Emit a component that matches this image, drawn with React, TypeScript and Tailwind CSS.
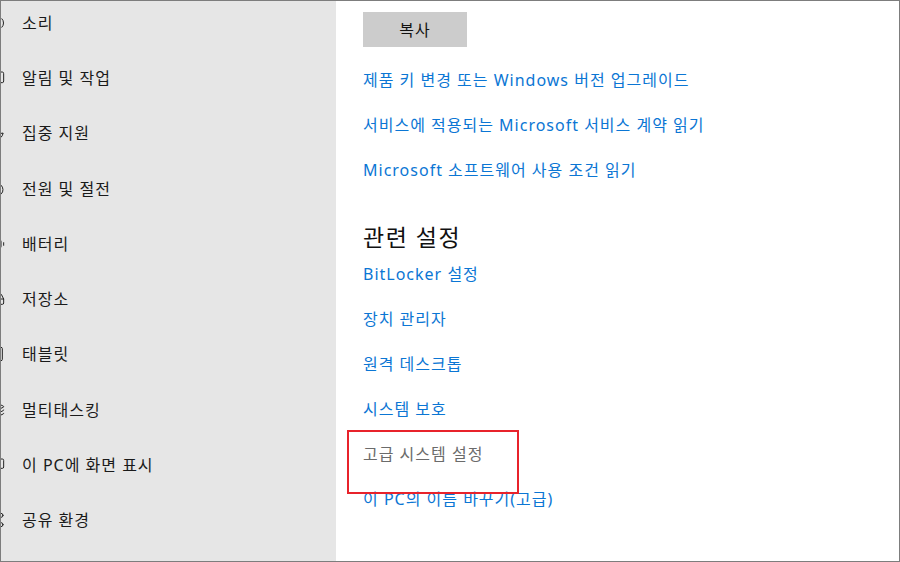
import React from "react";
import { Volume2, MessageSquare, Moon, Power, BatteryMedium, HardDrive, Tablet, Layers, Monitor, Share2 } from "lucide-react";

const side = [
  { t: "소리", I: Volume2 },
  { t: "알림 및 작업", I: MessageSquare },
  { t: "집중 지원", I: Moon },
  { t: "전원 및 절전", I: Power },
  { t: "배터리", I: BatteryMedium },
  { t: "저장소", I: HardDrive },
  { t: "태블릿", I: Tablet },
  { t: "멀티태스킹", I: Layers },
  { t: "이 PC에 화면 표시", I: Monitor },
  { t: "공유 환경", I: Share2 },
];

export default function App() {
  const font = { fontFamily: '"Noto Sans", "Noto Sans CJK KR", sans-serif' };
  return (
    <div className="w-[900px] h-[562px] border border-[#7d7d7d] flex overflow-hidden bg-white" style={font}>
      <div className="w-[335px] shrink-0 bg-[#e6e6e6] flex flex-col mt-[-6px]">
        {side.map(({ t, I }) => (
          <div key={t} className="h-[55.3px] shrink-0 flex items-center">
            <I className="w-4 h-4 ml-[-12px] text-[#222]" strokeWidth={1.5} />
            <span className="ml-[17px] text-[16px] tracking-[1px] text-[#1a1a1a]">{t}</span>
          </div>
        ))}
      </div>
      <div className="flex-1 flex flex-col pl-[27px] pt-[11px]">
        <button className="w-[104px] h-[35px] bg-[#cccccc] text-[16px] tracking-[1px] text-[#111] flex items-center justify-center">복사</button>
        <div className="flex flex-col mt-[10px] text-[16px] tracking-[1px] text-[#0b76d4]">
          <div className="h-[45px] flex items-center">제품 키 변경 또는 Windows 버전 업그레이드</div>
          <div className="h-[45px] flex items-center">서비스에 적용되는 Microsoft 서비스 계약 읽기</div>
          <div className="h-[45px] flex items-center">Microsoft 소프트웨어 사용 조건 읽기</div>
        </div>
        <div className="mt-[31px] text-[23px] tracking-[1.5px] text-[#111] h-[28px] flex items-center">관련 설정</div>
        <div className="flex flex-col text-[16px] tracking-[1px] text-[#0b76d4]">
          <div className="h-[45px] flex items-center">BitLocker 설정</div>
          <div className="h-[45px] flex items-center">장치 관리자</div>
          <div className="h-[45px] flex items-center">원격 데스크톱</div>
          <div className="h-[45px] flex items-center">시스템 보호</div>
          <div className="relative h-[45px] flex items-center text-[#6b6b6b]">
            고급 시스템 설정
            <div className="absolute left-[-16px] top-[-1px] w-[172px] h-[64px] border-2 border-[#e8232b]" />
          </div>
          <div className="h-[45px] flex items-center">이 PC의 이름 바꾸기(고급)</div>
        </div>
      </div>
    </div>
  );
}
